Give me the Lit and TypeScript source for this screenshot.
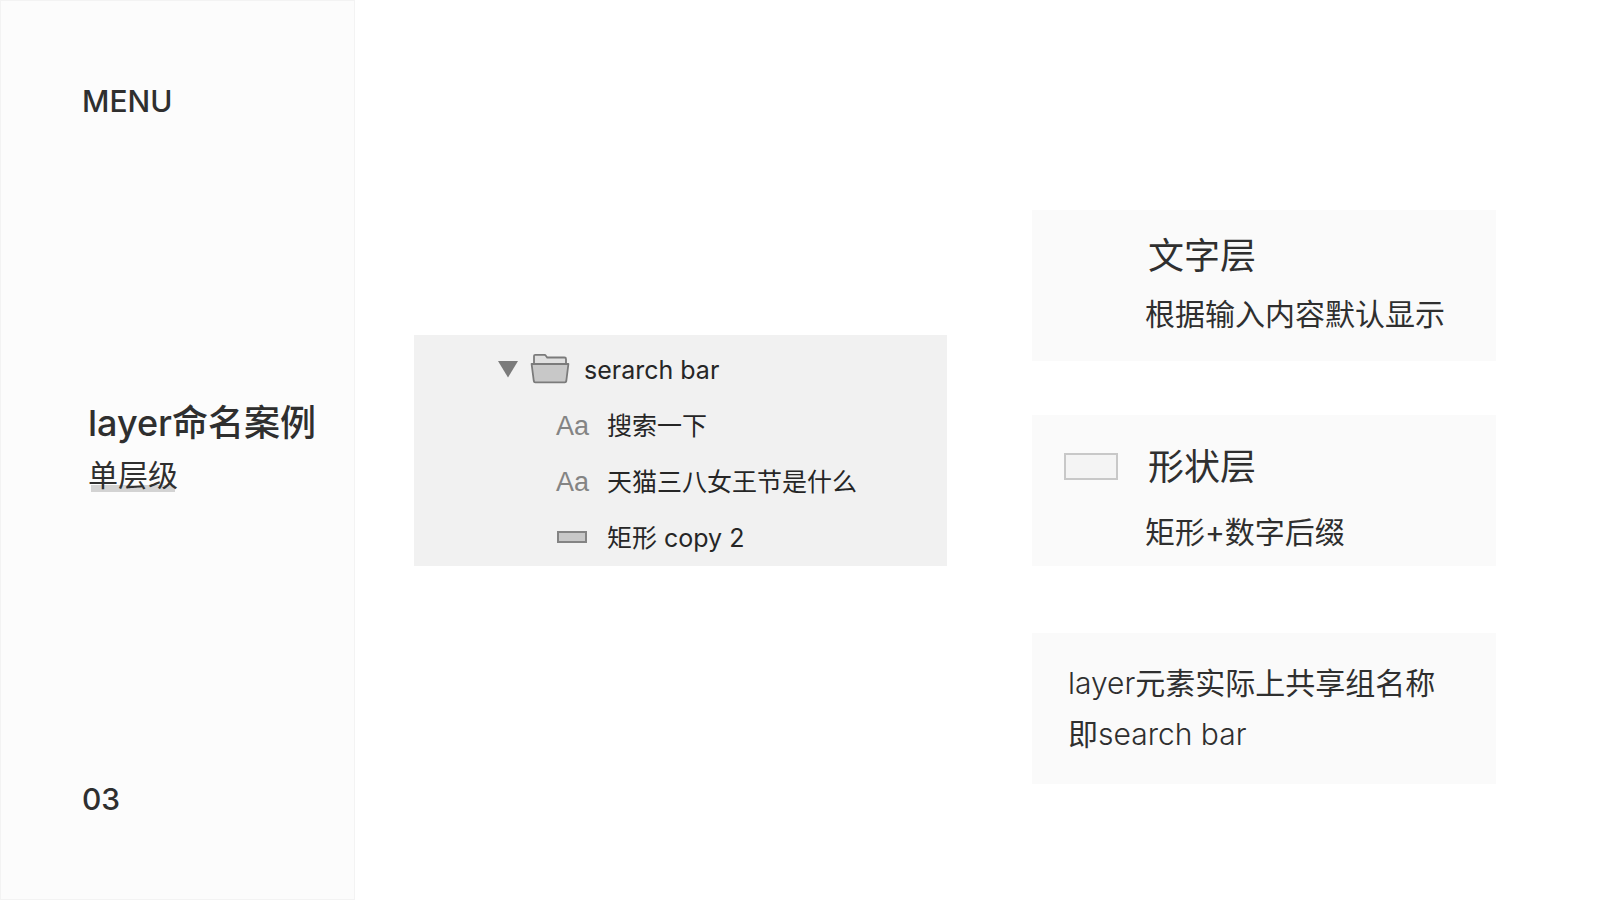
import { LitElement, html, css, svg } from "lit";
import { customElement, property } from "lit/decorators.js";

const folderIcon = html`<svg class="folder" width="40" height="32" viewBox="0 0 40 32" aria-hidden="true">
  ${svg`<path d="M4 10V1.9Q4 .9 5.2 .9H14.5Q15.4 .9 15.9 1.7L17.2 3.5H34.5Q36 3.5 36 4.9V10Z" fill="#e0e0e0" stroke="#7b7b7b" stroke-width="1.8"/>
  <path d="M1.6 10H38.4L36.3 27Q36.1 28.3 34.8 28.3H5.2Q4 28.3 3.8 27Z" fill="#c8c8c8" stroke="#7b7b7b" stroke-width="1.8" stroke-linejoin="round"/>`}
</svg>`;

const textIcon = html`<span class="glyph" aria-hidden="true">Aa</span>`;

const shapeIcon = html`<svg class="shape" width="32" height="14" viewBox="0 0 32 14" aria-hidden="true">
  <rect x="2" y="1" width="28" height="10" fill="#c8c8c8" stroke="#848484" stroke-width="2" />
</svg>`;

const layers = [
  { icon: textIcon, name: "搜索一下" },
  { icon: textIcon, name: "天猫三八女王节是什么" },
  { icon: shapeIcon, name: "矩形 copy 2" },
];

@customElement("side-menu")
class SideMenu extends LitElement {
  static styles = css`
    :host {
      box-sizing: border-box;
      display: grid;
      grid-template-rows: 1fr auto 1fr;
      padding: 80px 40px;
      background: #fcfcfc;
      border: 1px solid #f3f3f3;
    }
    .menu, .page { margin: 0; font-size: 30px; line-height: 40px; font-weight: 500; }
    .page { align-self: end; }
    .menu, .page { padding-left: 41px; }
    .heading { padding: 0 0 6px 47px; white-space: nowrap; }
    .title { margin: 0; font-size: 36px; line-height: 56px; font-weight: 500; }
    .sub { margin: 0; font-size: 30px; line-height: 48px; }
    .mark {
      background: linear-gradient(#d3d3d3, #d3d3d3) 3px calc(100% - 3px) / calc(100% - 6px) 7px no-repeat;
      display: inline-block;
      line-height: 40px;
    }
  `;
  render() {
    return html`
      <p class="menu">MENU</p>
      <div class="heading">
        <h1 class="title">layer命名案例</h1>
        <p class="sub"><span class="mark">单层级</span></p>
      </div>
      <p class="page">03</p>
    `;
  }
}

@customElement("layer-list")
class LayerList extends LitElement {
  static styles = css`
    :host { display: block; padding: 7px 0 0 84px; background: #f1f1f1; color: #262626; font-size: 25px; line-height: 32px; }
    .row { display: flex; align-items: center; height: 56px; white-space: nowrap; }
    .arrow { margin-right: 12px; }
    .folder { margin-right: 14px; }
    .list { margin: 0; padding: 0 0 0 58px; list-style: none; }
    .icon { display: flex; width: 51px; }
    .glyph { font-family: "Liberation Sans", sans-serif; font-size: 27px; color: #848484; }
  `;
  render() {
    return html`
      <div class="row">
        <svg class="arrow" width="20" height="18" viewBox="0 0 20 18" aria-hidden="true"><path d="M0 0H20L10 16.5Z" fill="#7b7b7b" /></svg>
        ${folderIcon}<span>serarch bar</span>
      </div>
      <ul class="list">
        ${layers.map((l) => html`<li class="row"><span class="icon">${l.icon}</span><span>${l.name}</span></li>`)}
      </ul>
    `;
  }
}

@customElement("note-card")
class NoteCard extends LitElement {
  @property() heading = "";
  @property() text = "";
  @property({ type: Boolean }) swatch = false;
  static styles = css`
    :host {
      box-sizing: border-box;
      display: flex;
      min-height: 151px;
      padding: 18px 32px 14px;
      background: #fafafa;
    }
    .side { flex: none; width: 81px; }
    .swatch { box-sizing: border-box; width: 54px; height: 27px; margin-top: 16px; border: 2px solid #c8c8c8; background: #f4f4f4; }
    .title { margin: 0; padding-left: 3px; font-size: 36px; line-height: 56px; font-weight: 400; }
    .text { margin: 0; font-size: 30px; line-height: 60px; }
    :host([swatch]) { padding-top: 22px; padding-bottom: 0; }
    :host([swatch]) .title { line-height: 60px; }
    :host([swatch]) .text { padding-top: 5px; }
  `;
  render() {
    return html`
      <div class="side">${this.swatch ? html`<div class="swatch"></div>` : ""}</div>
      <div>
        <h2 class="title">${this.heading}</h2>
        <p class="text">${this.text}</p>
      </div>
    `;
  }
}

@customElement("app-root")
class AppRoot extends LitElement {
  static styles = css`
    :host {
      display: grid;
      grid-template-columns: 355px 1fr;
      min-height: 100vh;
      background: #fff;
      color: #2f2f2f;
      font-family: Inter, "Noto Sans CJK SC", sans-serif;
    }
    .content {
      display: grid;
      grid-template-columns: 533fr 464fr;
      column-gap: 85px;
      align-items: center;
      padding: 0 104px 0 59px;
    }
    .notes { display: flex; flex-direction: column; padding-top: 94px; }
    .first { margin-bottom: 54px; }
    .second { margin-bottom: 67px; }
    .summary {
      box-sizing: border-box;
      min-height: 151px;
      margin: 0;
      padding: 25px 36px 24px;
      background: #fafafa;
      font-size: 30px;
      line-height: 51px;
    }
    .latin { font-weight: 300; }
  `;
  render() {
    return html`
      <side-menu></side-menu>
      <main class="content">
        <layer-list></layer-list>
        <div class="notes">
          <note-card class="first" heading="文字层" text="根据输入内容默认显示"></note-card>
          <note-card class="second" swatch heading="形状层" text="矩形+数字后缀"></note-card>
          <p class="summary"><span class="latin">layer</span>元素实际上共享组名称<br />即<span class="latin">search bar</span></p>
        </div>
      </main>
    `;
  }
}
